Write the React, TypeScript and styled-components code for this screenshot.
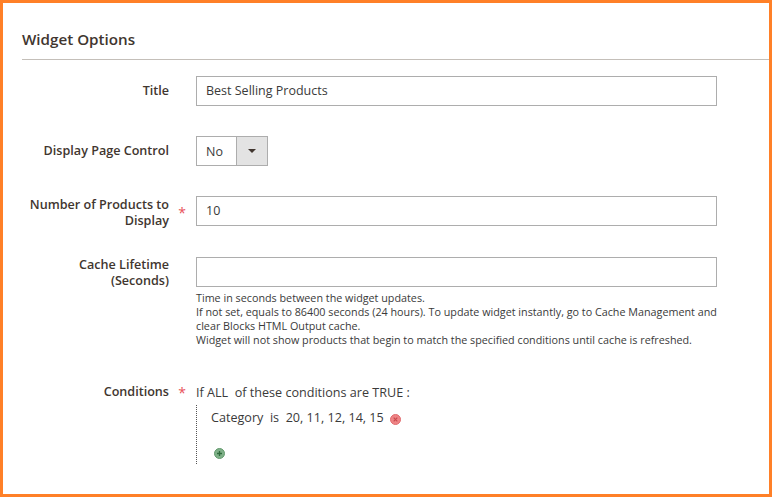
import styled, { createGlobalStyle } from 'styled-components'

const Global = createGlobalStyle`
  html, body {
    margin: 0;
    padding: 0;
    background: #fff;
  }
  * {
    box-sizing: border-box;
  }
`

const Frame = styled.div`
  width: 772px;
  height: 497px;
  border: 3px solid #ff8028;
  background: #fff;
  color: #3a3a3a;
  font-family: 'Open Sans', 'Liberation Sans', sans-serif;
  overflow: hidden;
  padding: 0 0 0 19px;
`

const Heading = styled.h2`
  margin: 0;
  height: 57px;
  padding-top: 26px;
  border-bottom: 1px solid #c4bfb9;
  font-size: 15.2px;
  line-height: 20px;
  font-weight: 600;
  color: #41362f;
`

const Fields = styled.div`
  display: flex;
  flex-direction: column;
  padding-top: 16px;
`

const Row = styled.div<{ $gap: number }>`
  display: grid;
  grid-template-columns: 147px 521px;
  column-gap: 27px;
  margin-bottom: ${(p) => p.$gap}px;
`

const Label = styled.label<{ $required?: boolean; $nudge?: number }>`
  position: relative;
  display: flex;
  align-items: center;
  justify-content: flex-end;
  height: 30px;
  padding-top: ${(p) => p.$nudge ?? 0}px;
  text-align: right;
  font-size: 12.6px;
  line-height: 16.5px;
  font-weight: 600;
  color: #41362f;
  ${(p) =>
    p.$required &&
    `&::after {
      content: '*';
      position: absolute;
      right: -17px;
      top: 9px;
      color: #e8525a;
      font-size: 14px;
      font-weight: 400;
    }`}
`

const TextInput = styled.div`
  height: 30px;
  width: 100%;
  border: 1px solid #adadad;
  padding: 0 9px;
  font-size: 12.5px;
  line-height: 27px;
`

const Select = styled.div`
  display: flex;
  width: 72px;
  height: 30px;
  border: 1px solid #adadad;
  font-size: 12.5px;
  line-height: 30px;
`

const SelectValue = styled.span`
  width: 40px;
  padding-left: 9px;
  border-right: 1px solid #adadad;
`

const SelectArrow = styled.span`
  flex: 1;
  display: flex;
  align-items: center;
  justify-content: center;
  background: #e3e3e3;
  &::before {
    content: '';
    border-top: 4px solid #41362f;
    border-left: 4px solid transparent;
    border-right: 4px solid transparent;
  }
`

const Note = styled.div`
  margin: 4px -4px 0 0;
  font-size: 10.78px;
  line-height: 14px;
`

const RuleHead = styled.div`
  padding-top: 9px;
  font-size: 12.6px;
  line-height: 16px;
  white-space: pre;
`

const RuleList = styled.div`
  margin-top: 4px;
  height: 59px;
  border-left: 1px dotted #555;
  padding-left: 14px;
  display: flex;
  flex-direction: column;
`

const RuleLine = styled.div`
  display: flex;
  align-items: center;
  gap: 6px;
  padding-top: 4px;
  font-size: 12.6px;
  line-height: 18px;
  white-space: pre;
`

const RuleIcon = styled.svg<{ $add?: boolean }>`
  width: 11px;
  height: 11px;
  flex: none;
  margin-top: ${(p) => (p.$add ? '21px' : '3px')};
  margin-left: ${(p) => (p.$add ? '3px' : '0')};
`

function RoundIcon({ add }: { add?: boolean }) {
  const fill = add ? '#7fb088' : '#ee8486'
  const edge = add ? '#629a6d' : '#e06a6d'
  return (
    <RuleIcon $add={add} viewBox="0 0 11 11">
      <circle cx="5.5" cy="5.5" r="5" fill={fill} stroke={edge} strokeWidth="1" />
      {add ? (
        <path d="M3 5.5h5M5.5 3v5" stroke="#2f6b3c" strokeWidth="1.3" />
      ) : (
        <path d="M3.7 3.7l3.6 3.6M7.3 3.7l-3.6 3.6" stroke="#c94a4d" strokeWidth="1.2" />
      )}
    </RuleIcon>
  )
}

export default function App() {
  return (
    <>
      <Global />
      <Frame>
        <Heading>Widget Options</Heading>
        <Fields>
          <Row $gap={30}>
            <Label>Title</Label>
            <TextInput>Best Selling Products</TextInput>
          </Row>
          <Row $gap={30}>
            <Label>Display Page Control</Label>
            <Select>
              <SelectValue>No</SelectValue>
              <SelectArrow />
            </Select>
          </Row>
          <Row $gap={31}>
            <Label $required $nudge={4}>Number of Products to Display</Label>
            <TextInput>10</TextInput>
          </Row>
          <Row $gap={29}>
            <Label $nudge={2}>Cache Lifetime (Seconds)</Label>
            <div>
              <TextInput />
              <Note>
                Time in seconds between the widget updates.
                <br />
                If not set, equals to 86400 seconds (24 hours). To update widget instantly, go to Cache Management and clear Blocks HTML Output cache.
                <br />
                Widget will not show products that begin to match the specified conditions until cache is refreshed.
              </Note>
            </div>
          </Row>
          <Row $gap={0}>
            <Label $required $nudge={2}>Conditions</Label>
            <div>
              <RuleHead>If ALL  of these conditions are TRUE :</RuleHead>
              <RuleList>
                <RuleLine>
                  Category  is  20, 11, 12, 14, 15
                  <RoundIcon />
                </RuleLine>
                <RoundIcon add />
              </RuleList>
            </div>
          </Row>
        </Fields>
      </Frame>
    </>
  )
}
